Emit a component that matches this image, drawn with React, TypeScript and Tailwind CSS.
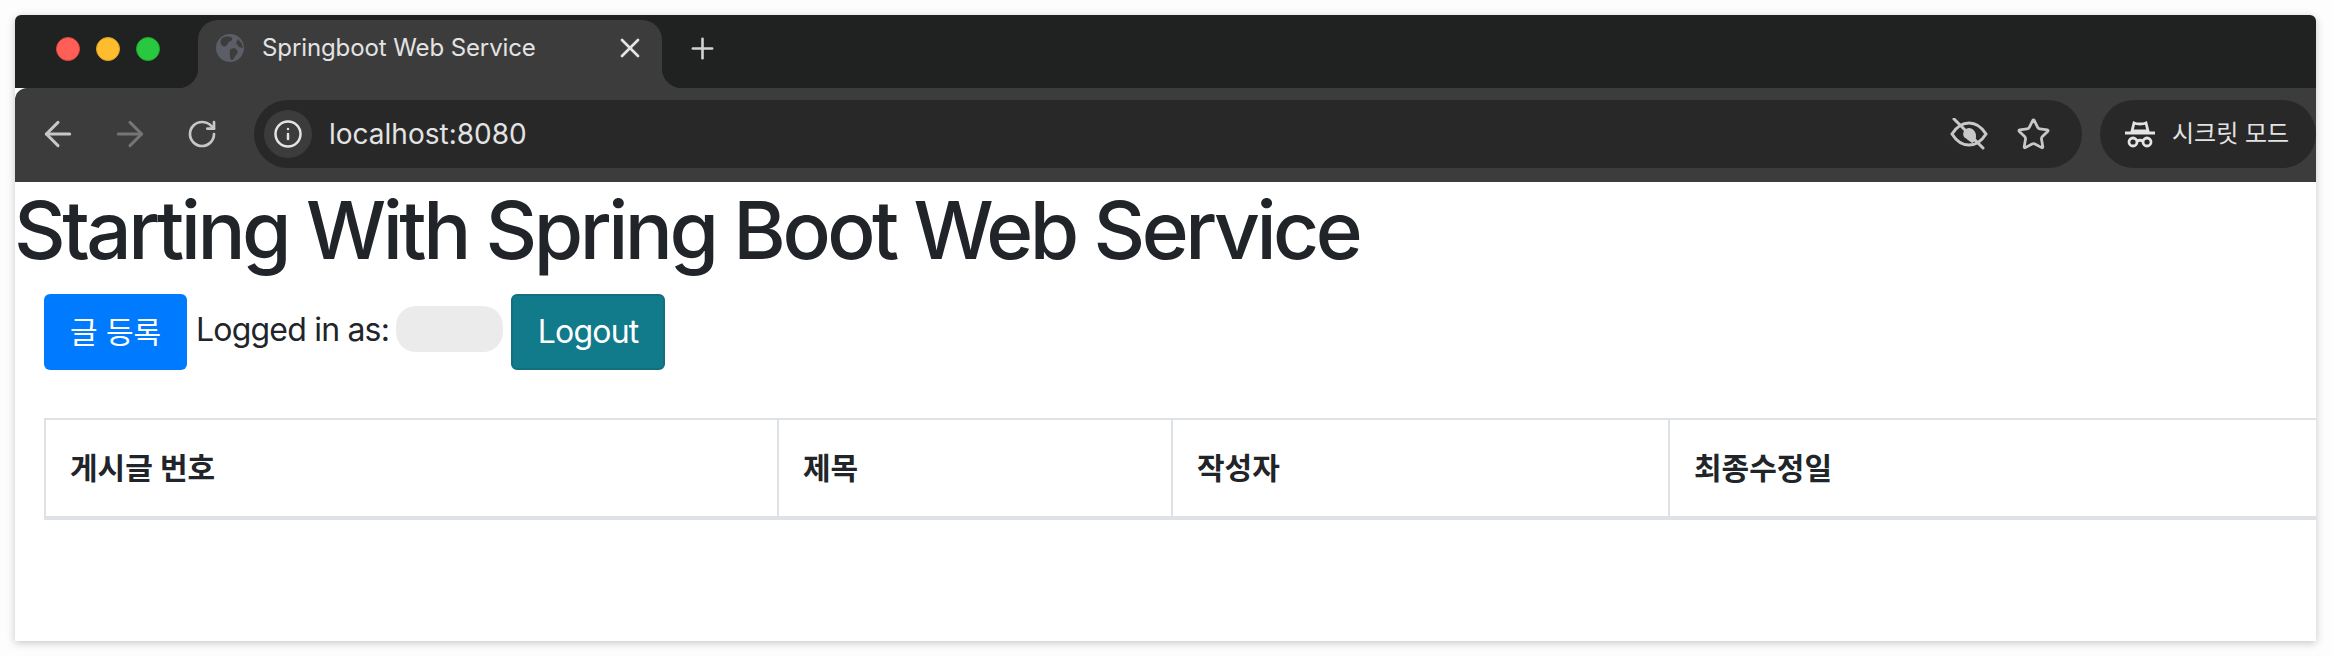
import React from 'react';
import { ArrowLeft, ArrowRight, Info, Plus, RotateCw, Star, X } from 'lucide-react';

const columns = [
  { label: '게시글 번호', width: 'w-[733px]' },
  { label: '제목', width: 'w-[394px]' },
  { label: '작성자', width: 'w-[497px]' },
  { label: '최종수정일', width: 'w-[648px]' },
];

const GlobeIcon = () => (
  <svg width="28" height="28" viewBox="0 0 28 28" className="shrink-0">
    <circle cx="14" cy="14" r="14" fill="#5b5e66" />
    <path d="M7 3.5c3-1.5 8-1.5 9 .5s-1 3-3 4-1 3-3 4-4 0-5-2-.5-5 2-6.500z" fill="#3c3c3c" />
    <path d="M15 15c2-1.500 5-1 6 1s1 3-1 5-2 5-4 5-2-3-2-5-1-4.500 1-6z" fill="#3c3c3c" />
    <path d="M22 5l4 5 1 4-4-1-3-4z" fill="#3c3c3c" />
  </svg>
);

const HiddenEyeIcon = () => (
  <svg width="38" height="32" viewBox="0 0 38 32" fill="none" stroke="#c8c8c8" strokeWidth="3">
    <path d="M2 16C7 8 13 5 19 5s12 3 17 11c-5 8-11 11-17 11S7 24 2 16z" />
    <path d="M19 10a6 6 0 0 0-5 9l8 6c3-1 4-4 4-7 0-4-3-8-7-8z" fill="#c8c8c8" stroke="none" />
    <path d="M4 1l29 29" strokeLinecap="round" />
  </svg>
);

const IncognitoIcon = () => (
  <svg width="30" height="28" viewBox="0 0 30 28" fill="none" stroke="#e4e4e4" strokeWidth="2.800">
    <path d="M7 11l2-8c2 1 4 1 6 1s4 0 6-1l2 8z" />
    <path d="M0 13h30" />
    <circle cx="8" cy="22" r="4" />
    <circle cx="22" cy="22" r="4" />
    <path d="M12 21c2-1 4-1 6 0" />
  </svg>
);

const TitleBar = () => (
  <div className="flex h-[73px] shrink-0 items-start bg-[#202221]">
    <div className="flex w-[183px] shrink-0 gap-[16px] pl-[41px] pt-[22px]">
      <span className="h-6 w-6 rounded-full border border-[#e0443e] bg-[#ff5f57]" />
      <span className="h-6 w-6 rounded-full border border-[#dea123] bg-[#febc2e]" />
      <span className="h-6 w-6 rounded-full border border-[#1aab29] bg-[#28c840]" />
    </div>
    <div className="relative mt-[5px] flex h-[68px] w-[464px] shrink-0 items-start rounded-t-[20px] bg-[#3c3c3c] pl-[18px] pr-[16px] pt-[14px]">
      <span className="absolute bottom-0 left-[-20px] h-5 w-5 bg-[radial-gradient(circle_at_0_0,transparent_20px,#3c3c3c_20.500px)]" />
      <span className="absolute bottom-0 right-[-20px] h-5 w-5 bg-[radial-gradient(circle_at_100%_0,transparent_20px,#3c3c3c_20.500px)]" />
      <GlobeIcon />
      <span className="ml-[18px] flex-1 whitespace-nowrap text-[24px] leading-[28px] tracking-[-0.1px] text-[#e3e3e3]">Springboot Web Service</span>
      <X size={32} strokeWidth={2} className="mt-[-2px] text-[#e3e3e3]" />
    </div>
    <Plus size={33} strokeWidth={1.9} className="ml-[24px] mt-[17px] text-[#d2d2d2]" />
  </div>
);

const ToolBar = () => (
  <div className="flex h-[94px] shrink-0 items-start rounded-tl-[12px] bg-[#3c3c3c] pt-[12px]">
    <div className="flex h-[68px] w-[239px] shrink-0 items-center pl-[23px]">
      <ArrowLeft size={40} strokeWidth={1.8} className="text-[#c7c7c7]" />
      <ArrowRight size={40} strokeWidth={1.8} className="ml-[32px] text-[#757575]" />
      <RotateCw size={32} strokeWidth={2} className="ml-[36px] text-[#c7c7c7]" />
    </div>
    <div className="flex h-[68px] flex-1 items-center rounded-full bg-[#282828] pl-[10px] pr-[31px]">
      <span className="flex h-12 w-12 items-center justify-center rounded-full bg-[#3c3c3c]">
        <Info size={30} strokeWidth={2} className="text-[#e3e3e3]" />
      </span>
      <span className="ml-[17px] flex-1 text-[28px] text-[#e3e3e3]">localhost:8080</span>
      <HiddenEyeIcon />
      <Star size={35} strokeWidth={1.9} className="ml-[28px] text-[#c8c8c8]" />
    </div>
    <div className="ml-[18px] flex h-[68px] w-[216px] shrink-0 items-center rounded-full bg-[#282828] pl-[25px]">
      <IncognitoIcon />
      <span className="ml-[17px] whitespace-nowrap text-[24px] text-[#e3e3e3]">시크릿 모드</span>
    </div>
  </div>
);

const Page = () => (
  <div className="flex-1 overflow-hidden bg-white text-[#212529]">
    <h1 className="ml-[-1px] whitespace-nowrap text-[80px] font-[450] leading-[96px] tracking-[-3.500px]">Starting With Spring Boot Web Service</h1>
    <div className="ml-[29px] mt-[16px] flex h-[76px] items-start">
      <button className="h-[76px] w-[143px] rounded-[6px] bg-[#007bff] text-[30px] text-white">글 등록</button>
      <span className="ml-[9px] mt-[12px] text-[32px] leading-[48px] tracking-[-0.8px]">Logged in as:</span>
      <span className="ml-[7px] mt-[12px] h-[46px] w-[107px] rounded-[20px] bg-[#ebebeb]" />
      <button className="ml-[8px] h-[76px] w-[154px] rounded-[6px] border-2 border-[#10707f] bg-[#117a8b] text-[32px] tracking-[-0.8px] text-white">Logout</button>
    </div>
    <table className="ml-[29px] mt-[48px] w-[2272px] table-fixed border-collapse">
      <thead>
        <tr>
          {columns.map((col) => (
            <th key={col.label} className={`${col.width} h-[99px] border-2 border-b-4 border-[#dee2e6] pl-[24px] text-left align-middle text-[30px] font-bold`}>
              {col.label}
            </th>
          ))}
        </tr>
      </thead>
    </table>
  </div>
);

export default function App() {
  return (
    <div className="h-[656px] w-[2332px] overflow-hidden bg-[#fdfdfd] pl-[15px] pt-[15px] font-['Inter','Noto_Sans_CJK_KR',sans-serif]">
      <div className="flex h-[626px] w-[2301px] flex-col overflow-hidden rounded-t-[6px] shadow-[0_2px_8px_rgba(0,0,0,0.22)]">
        <TitleBar />
        <ToolBar />
        <Page />
      </div>
    </div>
  );
}
